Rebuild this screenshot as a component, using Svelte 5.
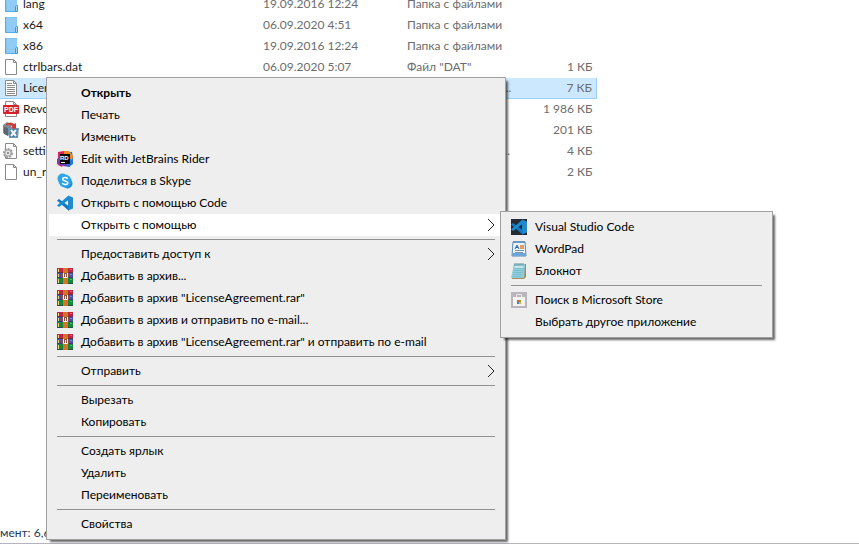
<script>
	let files = [
		{ icon: 'folder', name: 'lang', date: '19.09.2016 12:24', type: 'Папка с файлами', size: '' },
		{ icon: 'folder', name: 'x64', date: '06.09.2020 4:51', type: 'Папка с файлами', size: '' },
		{ icon: 'folder', name: 'x86', date: '19.09.2016 12:24', type: 'Папка с файлами', size: '' },
		{ icon: 'page', name: 'ctrlbars.dat', date: '06.09.2020 5:07', type: 'Файл "DAT"', size: '1 КБ' },
		{ icon: 'text', name: 'LicenseAgreement', date: '', type: 'Текстовый докум...', size: '7 КБ', selected: true },
		{ icon: 'pdf', name: 'Revo', date: '', type: '', size: '1 986 КБ' },
		{ icon: 'revo', name: 'Revo', date: '', type: '', size: '201 КБ' },
		{ icon: 'ini', name: 'settings', date: '', type: 'Параметры конф...', size: '4 КБ' },
		{ icon: 'page', name: 'un_r', date: '', type: '', size: '2 КБ' }
	];

	let openWith = [
		{ label: 'Visual Studio Code', icon: 'codeDark' },
		{ label: 'WordPad', icon: 'wordpad' },
		{ label: 'Блокнот', icon: 'notepad' },
		null,
		{ label: 'Поиск в Microsoft Store', icon: 'store' },
		{ label: 'Выбрать другое приложение' }
	];

	// null is a separator
	let menu = [
		{ label: 'Открыть', main: true },
		{ label: 'Печать' },
		{ label: 'Изменить' },
		{ label: 'Edit with JetBrains Rider', icon: 'rider' },
		{ label: 'Поделиться в Skype', icon: 'skype' },
		{ label: 'Открыть с помощью Code', icon: 'code' },
		{ label: 'Открыть с помощью', arrow: true, children: openWith },
		null,
		{ label: 'Предоставить доступ к', arrow: true },
		{ label: 'Добавить в архив...', icon: 'rar' },
		{ label: 'Добавить в архив "LicenseAgreement.rar"', icon: 'rar' },
		{ label: 'Добавить в архив и отправить по e-mail...', icon: 'rar' },
		{ label: 'Добавить в архив "LicenseAgreement.rar" и отправить по e-mail', icon: 'rar' },
		null,
		{ label: 'Отправить', arrow: true },
		null,
		{ label: 'Вырезать' },
		{ label: 'Копировать' },
		null,
		{ label: 'Создать ярлык' },
		{ label: 'Удалить' },
		{ label: 'Переименовать' },
		null,
		{ label: 'Свойства' }
	];
</script>

{#snippet vscode()}
	<path d="M11 0.500 16 2.500v11l-5 2z" fill="#2489ca" />
	<path d="M0 5.500 2 4l9.500 7v4.500z" fill="#0f79c4" />
	<path d="M0 10.500 2 12l9.500-7V0.500z" fill="#1a8ad6" />
{/snippet}

{#snippet sheet()}
	<path d="M2.500 0.500h8l3 3v12h-11z" fill="#fff" stroke="#8a8a8a" />
	<path d="M10.500 0.500v3h3" fill="none" stroke="#8a8a8a" />
{/snippet}

{#snippet icon(name)}
	<svg class="icon" viewBox="0 0 16 16" width="16" height="16" aria-hidden="true">
		{#if name === 'folder'}
			<path d="M2 0h12v16H3l-1-1z" fill="#7fc1f1" />
			<path d="M3 1h11v14H4z" fill="#90cbf6" />
			<path d="M2.500 0v15.500h10" fill="none" stroke="#59a9e2" />
			<path d="M12.500 15.500v-5q1-2 2-1v6z" fill="#a4d8fb" stroke="#3b9be0" />
		{:else if name === 'page'}
			{@render sheet()}
		{:else if name === 'text'}
			{@render sheet()}
			<path d="M4 3.500h5M4 5.500h8M4 7.500h8M4 9.500h8M4 11.500h8M4 13.500h8" stroke="#8b8b8b" />
		{:else if name === 'pdf'}
			{@render sheet()}
			<rect x="0" y="4" width="16" height="9" rx="1" fill="#d3222a" />
			<text x="8" y="11" class="pdf">PDF</text>
		{:else if name === 'revo'}
			<path d="M0 3 4 0l4 2v12l-4-1-4-2z" fill="#7d8790" />
			<path d="M1 5 5 6v8l-4-2z" fill="#5a6670" />
			<path d="M5 6h11l-1 10H6z" fill="#6b98b5" />
			<path d="M7 7h7v8H7z" fill="#4e7da0" />
			<path d="M3 2Q8-1 11 2l2-1v6L8 6l1-2Q7 2 3 3z" fill="#d03a35" />
			<path d="m8 8 5 6M13 8l-5 6" stroke="#f4f8fa" stroke-width="2" />
		{:else if name === 'ini'}
			{@render sheet()}
			<circle cx="5" cy="10" r="4" fill="#dedede" stroke="#989898" stroke-width="2" stroke-dasharray="2 1" />
			<circle cx="5" cy="10" r="3" fill="#e5e5e5" stroke="#aaa" />
			<circle cx="5" cy="10" r="1" fill="#777" />
		{:else if name === 'rider'}
			<path d="M1 1 7 0l3 6-5 10-4-2z" fill="#d5225c" />
			<path d="M0 8 5 5v10l-5-2z" fill="#8c35a0" />
			<path d="M3 11h10v5l-7-1z" fill="#5c45b8" />
			<path d="M10 1h5l1 6v6l-4 3-2-1z" fill="#2277dc" />
			<path d="M7 0h5l4 5-1 4-8-6z" fill="#f08a26" />
			<path d="M3 3h10v10H3z" fill="#080808" />
			<path d="M4 11.500h4" stroke="#fff" />
			<text x="3" y="9" class="rd">RD</text>
		{:else if name === 'skype'}
			<circle cx="5.500" cy="5.500" r="5" fill="#30a8e7" />
			<circle cx="10.500" cy="10.500" r="5" fill="#198ed4" />
			<circle cx="8" cy="8" r="6.500" fill="#2ca5e6" />
			<path
				d="M10.800 5.600C9 3.900 5.600 4.300 5.700 6.200c.1 2 5.100 1.400 5.100 3.600 0 2.100-3.900 2.300-5.600.5"
				fill="none"
				stroke="#fff"
				stroke-width="1.600"
			/>
		{:else if name === 'code'}
			{@render vscode()}
		{:else if name === 'codeDark'}
			<path d="M0 0h16v16H0z" fill="#252a33" />
			{@render vscode()}
		{:else if name === 'rar'}
			<path d="M0 0h16v5H0z" fill="#bd2747" />
			<path d="M0 5h16v5H0z" fill="#4454b5" />
			<path d="M0 10h16v6H0z" fill="#188540" />
			<path d="M0 4.500h16M0 9.500h16M0 15.500h16" stroke="#343044" opacity="0.6" />
			<path d="M1.500 1v3M1.500 6v3M1.500 11v4" stroke="#eed46f" />
			<path d="M13 1.500h2" stroke="#e95a70" />
			<path d="M13 6.500h2" stroke="#7584dd" />
			<path d="M13 11.500h2" stroke="#45b968" />
			<path d="M6 0h5v16H6z" fill="#d77422" />
			<path d="M6 5h6v5H5V5z" fill="#8d5145" />
			<path d="M6.500 5v4.500h4V5M8.500 6v3" fill="none" stroke="#fff" />
		{:else if name === 'wordpad'}
			<path d="M2 1h12l1 14H1z" fill="#e8f4fd" stroke="#5588b8" />
			<path d="M1 12h14v3H1z" fill="#6fa6d5" />
			<path d="M3 0v2M5 0v2M7 0v2M9 0v2M11 0v2M13 0v2" stroke="#3d75a8" />
			<path d="m4 8 2-4 2 4M5 6.500h2" fill="none" stroke="#2864ad" />
			<path d="M9 4h4v4H9z" fill="#e79b5a" />
			<path d="M4 9.500h9M4 11.500h8" stroke="#7796b5" />
		{:else if name === 'notepad'}
			<path d="M3 1h12v13l-2 2H1z" fill="#a58b54" />
			<path d="M3 1h11l-1 14H0z" fill="#91d0df" />
			<path d="M4 2h9l-1 3H3z" fill="#c0e7ee" />
			<path d="M3 5.500h10M2.500 7.500h10M2 9.500h10M2 11.500h10M1.500 13.500h10" stroke="#65aebd" opacity="0.5" />
			<path d="M4 0v3M6 0v3M8 0v3M10 0v3M12 0v3" stroke="#497d88" opacity="0.8" />
		{:else if name === 'store'}
			<path d="M0 0h16v16H0z" fill="#bab5bd" />
			<path d="M5.500 5V2.500h5V5" fill="none" stroke="#e9e7e9" />
			<path d="M2 5h12v9H2z" fill="#f4f3f4" />
			<path d="M6 8h2v2H6z" fill="#e15b35" />
			<path d="M8 8h2v2H8z" fill="#7aa832" />
			<path d="M6 10h2v2H6z" fill="#318fd2" />
			<path d="M8 10h2v2H8z" fill="#e8b52d" />
		{/if}
	</svg>
{/snippet}

{#snippet menuItems(items)}
	{#each items as item}
		{#if item}
			<li role="none">
				<button
					type="button"
					role="menuitem"
					class="item"
					class:main={item.main}
					class:open={item.children}
					aria-haspopup={item.arrow ? 'menu' : undefined}
				>
					<span class="slot">
						{#if item.icon}{@render icon(item.icon)}{/if}
					</span>
					<span class="label">{item.label}</span>
					{#if item.arrow}
						<svg class="arrow" viewBox="0 0 8 14" width="8" height="14" aria-hidden="true">
							<path d="m1 1 6 6-6 6" fill="none" stroke="#222" />
						</svg>
					{/if}
				</button>
				{#if item.children}
					<ul class="menu submenu" role="menu" aria-label={item.label}>
						{@render menuItems(item.children)}
					</ul>
				{/if}
			</li>
		{:else}
			<li class="separator" role="separator"></li>
		{/if}
	{/each}
{/snippet}

<div class="explorer">
	<main>
		<table>
			<colgroup>
				<col class="col-name" />
				<col class="col-date" />
				<col class="col-type" />
				<col class="col-size" />
			</colgroup>
			<tbody>
				{#each files as file}
					<tr class:selected={file.selected}>
						<td>
							<div class="name">
								{@render icon(file.icon)}
								<span>{file.name}</span>
							</div>
						</td>
						<td>{file.date}</td>
						<td>{file.type}</td>
						<td class="size">{file.size}</td>
					</tr>
				{/each}
			</tbody>
		</table>
	</main>
	<footer>мент: 6,6</footer>

	<ul class="menu context" role="menu" aria-label="LicenseAgreement">
		{@render menuItems(menu)}
	</ul>
</div>

<style>
	:global(body) {
		margin: 0;
		background: #fff;
	}

	.explorer {
		position: relative;
		display: flex;
		flex-direction: column;
		box-sizing: border-box;
		min-height: 100vh;
		overflow: hidden;
		font-family: Lato, 'Open Sans', sans-serif;
		font-size: 12px;
		line-height: 20px;
		color: #000;
	}

	main {
		flex: 1;
		margin-top: -7px;
	}

	table {
		width: 597px;
		table-layout: fixed;
		border-collapse: collapse;
	}

	.col-name {
		width: 263px;
	}

	.col-date {
		width: 144px;
	}

	.col-type {
		width: 108px;
	}

	td {
		height: 20px;
		padding: 0;
		border-top: 1px solid transparent;
		border-bottom: 1px solid transparent;
		color: #6d6d6d;
		white-space: nowrap;
	}

	.selected td {
		background: #cce8ff;
		border-color: #99d1ff;
	}

	.selected td:last-child {
		border-right: 1px solid #99d1ff;
	}

	.name {
		display: flex;
		align-items: center;
		gap: 4px;
		padding-left: 3px;
		color: #1a1a1a;
	}

	.size {
		padding-right: 4px;
		text-align: right;
	}

	footer {
		height: 20px;
		margin-bottom: 1px;
		border-bottom: 1px solid #b4b4be;
		color: #1e395b;
	}

	.menu {
		position: absolute;
		box-sizing: border-box;
		margin: 0;
		padding: 4px 2px;
		list-style: none;
		background: #eee;
		border: 1px solid #a0a0a0;
		box-shadow: 3px 3px 2px -1px rgba(0, 0, 0, 0.6);
	}

	.context {
		top: 77px;
		left: 46px;
		width: 460px;
	}

	.submenu {
		z-index: 1;
		top: -3px;
		left: calc(100% - 3px);
		width: 273px;
	}

	li {
		position: relative;
	}

	.item {
		display: flex;
		align-items: center;
		gap: 8px;
		width: 100%;
		height: 22px;
		padding: 0 8px;
		border: none;
		background: transparent;
		font: inherit;
		color: inherit;
		text-align: left;
		white-space: nowrap;
	}

	.item:hover,
	.open {
		background: #fff;
	}

	.main {
		font-weight: bold;
	}

	.slot {
		width: 16px;
		height: 16px;
	}

	.label {
		flex: 1;
	}

	.icon,
	.arrow {
		display: block;
		flex: none;
	}

	.separator {
		height: 1px;
		margin: 3px 8px;
		background: #919191;
	}

	.pdf {
		font: bold 7px 'Liberation Sans', sans-serif;
		text-anchor: middle;
		fill: #fff;
	}

	.rd {
		font: bold 6px 'Liberation Sans', sans-serif;
		fill: #fff;
	}
</style>
